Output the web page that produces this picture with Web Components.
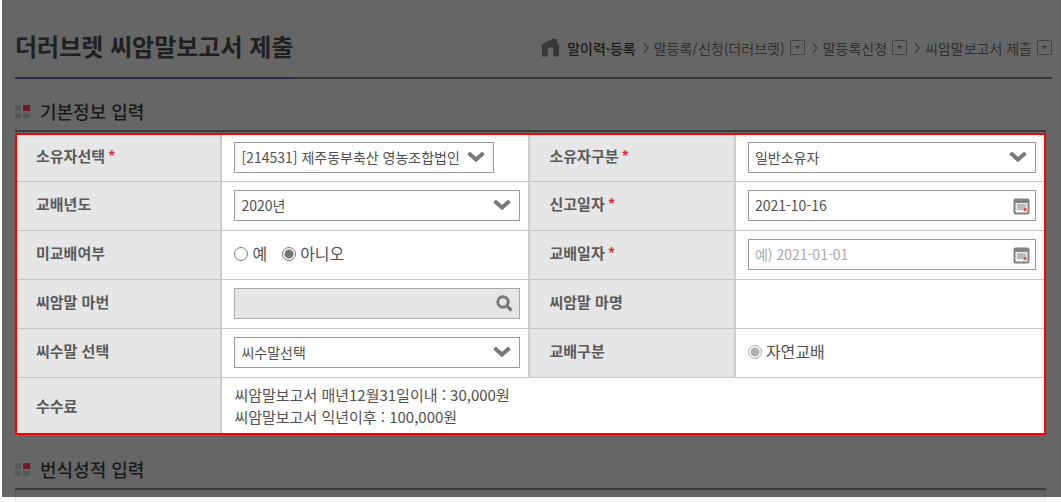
<!DOCTYPE html>
<html lang="ko">
<head>
<meta charset="utf-8">
<title>더러브렛 씨암말보고서 제출</title>
<style>
  body { margin: 0; background: #fff; color: #1a1a1a; font-family: "Noto Sans CJK KR", "Noto Sans", sans-serif; font-size: 14px; }
</style>
</head>
<body>
<page-shell>
  <page-header>
    더러브렛 씨암말보고서 제출
    <bread-crumb slot="trail"></bread-crumb>
  </page-header>
  <section-title>기본정보 입력</section-title>
  <basic-info-form></basic-info-form>
  <section-title>번식성적 입력</section-title>
</page-shell>

<script>
function define(name, html) {
  const template = document.createElement('template');
  template.innerHTML = html;
  customElements.define(name, class extends HTMLElement {
    constructor() {
      super();
      this.attachShadow({ mode: 'open' }).append(template.content.cloneNode(true));
    }
  });
}

define('page-shell', `
  <style>
    :host { display: block; padding-left: 2px; }
    .dim { background: #666; padding: 28px 8px 0 13px; border-right: 1px solid #606060; }
    .content { display: flow-root; }
    .panel { height: 7px; margin-right: 6px; background: #626262; border: solid #5c5c5c; border-width: 0 1px; }
    .rest { height: 6px; margin: 0 15px 0 13px; background: #f4f4f4; border: solid #e6e6e6; border-width: 0 1px; }
  </style>
  <main class="dim"><div class="content"><slot></slot></div><div class="panel"></div></main>
  <div class="rest"></div>
`);

define('page-header', `
  <style>
    :host { display: block; }
    header { display: flex; justify-content: space-between; align-items: center; height: 49px; border-bottom: 2px solid #373737; }
    h1 { margin: 0; height: 51px; box-sizing: border-box; padding-bottom: 14px; border-bottom: 2px solid #302b4c; align-self: flex-start; font-size: 24px; line-height: 35px; font-weight: 700; color: #202020; white-space: nowrap; }
    .trail { padding-bottom: 10px; }
  </style>
  <header><h1><slot></slot></h1><div class="trail"><slot name="trail"></slot></div></header>
`);

define('bread-crumb', `
  <style>
    :host { display: block; }
    nav { display: flex; align-items: center; line-height: 20px; white-space: nowrap; }
    a { color: #303030; text-decoration: none; }
    a.root { display: flex; align-items: center; gap: 7px; color: #1a1a1a; font-weight: 500; }
    svg { display: block; }
    button { width: 15px; height: 15px; margin: 0 0 0 5px; padding: 0; border: 1px solid #444; border-radius: 1px; background: none; display: grid; place-items: center; }
    .sep { margin: 0 5px 0 7px; }
  </style>
  <nav aria-label="현재 위치">
    <a class="root" href="#">
      <svg width="19" height="19" viewBox="0 0 19 19" fill="#383838"><path d="M9.5 2 L12.500 .5 L14 2 V1 H16 V4 L18.500 8 L18 9.500 V18.500 H12.400 V12.500 Q12.400 9.500 9.500 9.500 Q6.600 9.500 6.600 12.500 V18.500 H1 V9.500 L.3 8 L3 5Z"/></svg>
      말이력·등록</a>
    <svg class="sep" width="6" height="12" viewBox="0 0 6 12" fill="none" stroke="#3c3c3c" stroke-width="1.2"><path d="M.8 1 L5 6 L.8 11"/></svg>
    <a href="#">말등록/신청(더러브렛)</a>
    <button aria-label="말등록/신청 메뉴"><svg width="5" height="4" fill="#3a3a3a"><path d="M0 0H5L2.5 3.5Z"/></svg></button>
    <svg class="sep" width="6" height="12" viewBox="0 0 6 12" fill="none" stroke="#3c3c3c" stroke-width="1.2"><path d="M.8 1 L5 6 L.8 11"/></svg>
    <a href="#">말등록신청</a>
    <button aria-label="말등록신청 메뉴"><svg width="5" height="4" fill="#3a3a3a"><path d="M0 0H5L2.5 3.5Z"/></svg></button>
    <svg class="sep" width="6" height="12" viewBox="0 0 6 12" fill="none" stroke="#3c3c3c" stroke-width="1.2"><path d="M.8 1 L5 6 L.8 11"/></svg>
    <a href="#">씨암말보고서 제출</a>
    <button aria-label="씨암말보고서 제출 메뉴"><svg width="5" height="4" fill="#3a3a3a"><path d="M0 0H5L2.5 3.5Z"/></svg></button>
  </nav>
`);

define('section-title', `
  <style>
    :host { display: block; margin: 19px 6px 0 0; }
    h2 { display: flex; align-items: center; gap: 10px; margin: 0; padding-bottom: 6px; border-bottom: 2px solid #3a3b3d; font-size: 18px; line-height: 26px; font-weight: 500; }
    svg { flex: none; }
  </style>
  <h2>
    <svg width="15" height="15" aria-hidden="true"><path fill="#54585a" d="M0 1h6v6H0zM0 9h6v5H0zM8 9h7v5H8z"/><path fill="#74182a" d="M8 1h7v6H8z"/></svg>
    <slot></slot>
  </h2>
`);

define('field-box', `
  <style>
    :host { display: flex; position: relative; }
    :host([narrow]) { width: 260px; }
    ::slotted(select), ::slotted(input) {
      appearance: none; box-sizing: border-box; width: 100%; height: 31px; margin: 0; padding: 0 30px 0 6px;
      border: 1px solid #999; border-radius: 0; background: #fff; color: #505050;
      font: 14px/20px "Noto Sans CJK KR", "Noto Sans", sans-serif; outline: none; }
    ::slotted(input:disabled) { background: #e6e6e6; border-color: #aaa; }
    svg { display: none; position: absolute; pointer-events: none; }
    :host([icon="down"]) .down { display: block; right: 9px; top: 9px; }
    :host([icon="date"]) .date { display: block; right: 6px; top: 8px; }
    :host([icon="find"]) .find { display: block; right: 7px; top: 7px; }
  </style>
  <slot></slot>
  <svg class="down" width="18" height="12" viewBox="0 0 18 12" fill="none" stroke="#7a7a7a" stroke-width="4"><path d="M1.5 2 L9 8.5 L16.500 2"/></svg>
  <svg class="date" width="17" height="17" viewBox="0 0 17 17"><rect x=".5" y=".5" width="16" height="16" rx="2" fill="#808285"/><rect x="2.500" y="5" width="12" height="9.500" fill="#f2f2f2"/><path d="M4 7h9M4 9h9M4 11h6" stroke="#a8a8a8" stroke-width="1.500"/><rect x="10.500" y="10" width="3" height="3" fill="#e8504a"/></svg>
  <svg class="find" width="17" height="17" viewBox="0 0 17 17" fill="none" stroke="#7a7a7a"><circle cx="7" cy="7" r="5.200" stroke-width="3"/><path d="M11 11 L15.500 15.500" stroke-width="3.200"/></svg>
`);

define('basic-info-form', `
  <style>
    :host { display: block; margin: 1px 6px 21px 0; border: 2px solid #f00; background: #fff; color: #505050; }
    table { width: 100%; border-spacing: 0; table-layout: fixed; }
    col.name { width: 20%; }
    col.value { width: 30%; }
    tr { height: 49px; }
    tr:first-child { height: 47px; }
    tr:last-child { height: 55px; }
    th, td { box-sizing: border-box; padding: 0 8px 2px 12px; border: solid #c4c4c4; border-width: 0 0 1px; text-align: left; font-size: 15px; line-height: 22px; }
    th { padding: 0 19px 5px; border-right: 2px solid #ccc; background: #e6e6e6; font-weight: 700; color: #5a5a5a; }
    td:not(:last-child) { border-right: 2px solid #ccc; }
    tr:last-child > * { border-bottom: 0; padding-bottom: 0; }
    th i { color: #d0353c; font-style: normal; margin-left: 3px; }
    .options { display: flex; gap: 15px; font-size: 16px; padding-bottom: 2px; }
    .options label { display: flex; align-items: center; gap: 4px; }
    [type="radio"] { appearance: none; box-sizing: border-box; width: 14px; height: 14px; margin: 2px 0 0; border: 1px solid #777; border-radius: 50%; background: #fff; }
    [type="radio"]:checked { background: radial-gradient(circle, #777 4px, #fff 5px); }
    [type="radio"]:disabled { border-color: #aaa; background: radial-gradient(circle, #b0b0b0 4px, #fff 5px); }
    ::placeholder { color: #aaa; }
    p { margin: 0; }
  </style>
  <table>
    <colgroup><col class="name"><col class="value"><col class="name"><col class="value"></colgroup>
    <tbody>
    <tr>
      <th scope="row"><label for="owner">소유자선택<i>*</i></label></th>
      <td><field-box icon="down" narrow><select id="owner"><option>[214531] 제주동부축산 영농조합법인</option></select></field-box></td>
      <th scope="row"><label for="kind">소유자구분<i>*</i></label></th>
      <td><field-box icon="down"><select id="kind"><option>일반소유자</option></select></field-box></td>
    </tr>
    <tr>
      <th scope="row"><label for="year">교배년도</label></th>
      <td><field-box icon="down"><select id="year"><option>2020년</option></select></field-box></td>
      <th scope="row"><label for="reported">신고일자<i>*</i></label></th>
      <td><field-box icon="date"><input id="reported" type="text" value="2021-10-16"></field-box></td>
    </tr>
    <tr>
      <th scope="row" id="unmated">미교배여부</th>
      <td><div class="options" role="radiogroup" aria-labelledby="unmated">
        <label><input type="radio" name="unmated">예</label>
        <label><input type="radio" name="unmated" checked>아니오</label>
      </div></td>
      <th scope="row"><label for="mated">교배일자<i>*</i></label></th>
      <td><field-box icon="date"><input id="mated" type="text" placeholder="예) 2021-01-01"></field-box></td>
    </tr>
    <tr>
      <th scope="row"><label for="mare">씨암말 마번</label></th>
      <td><field-box icon="find"><input id="mare" type="text" disabled></field-box></td>
      <th scope="row">씨암말 마명</th>
      <td></td>
    </tr>
    <tr>
      <th scope="row"><label for="stallion">씨수말 선택</label></th>
      <td><field-box icon="down"><select id="stallion"><option>씨수말선택</option></select></field-box></td>
      <th scope="row" id="method">교배구분</th>
      <td><div class="options" role="radiogroup" aria-labelledby="method">
        <label><input type="radio" name="method" checked disabled>자연교배</label>
      </div></td>
    </tr>
    <tr>
      <th scope="row">수수료</th>
      <td colspan="3"><p>씨암말보고서 매년12월31일이내 : 30,000원</p><p>씨암말보고서 익년이후 : 100,000원</p></td>
    </tr>
    </tbody>
  </table>
`);
</script>
</body>
</html>
